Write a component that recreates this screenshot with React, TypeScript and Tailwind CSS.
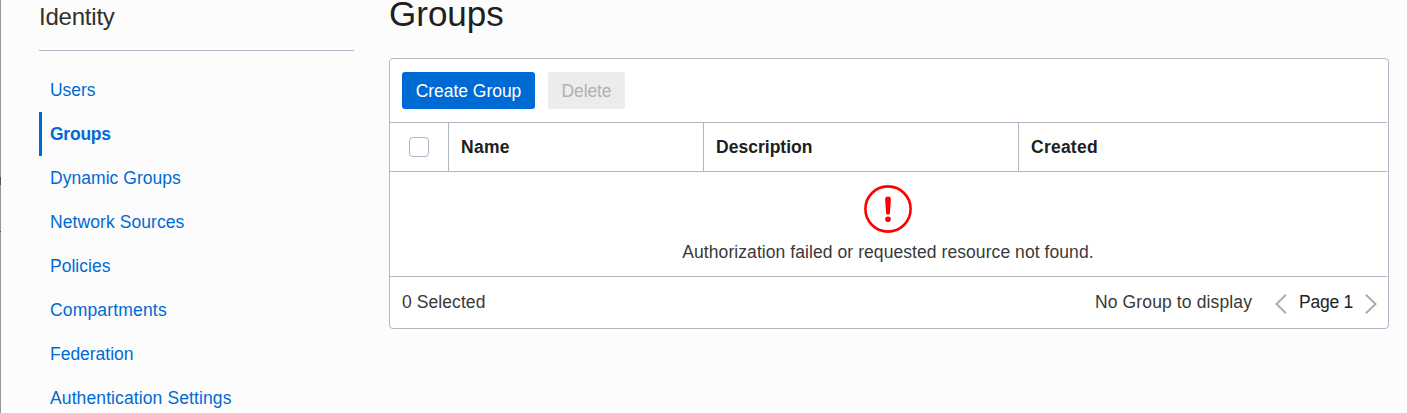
const links = [
  { label: "Users", cls: "tracking-[-0.05px]" },
  { label: "Groups", cls: "tracking-[-0.24px]", active: true },
  { label: "Dynamic Groups", cls: "tracking-[0.04px]" },
  { label: "Network Sources", cls: "tracking-[0.08px]" },
  { label: "Policies", cls: "tracking-[0.02px]" },
  { label: "Compartments", cls: "tracking-[0.17px]" },
  { label: "Federation", cls: "tracking-[-0.02px]" },
  { label: "Authentication Settings", cls: "tracking-[0.11px]" },
];

function Sidebar() {
  return (
    <aside className="ml-[38px] w-[315px] shrink-0">
      <h2 className="flex h-[51px] items-start border-b border-[#b0bac6] text-[24px] leading-[34px] font-light tracking-[-0.22px] text-[#303030]">
        <span>Identity</span>
      </h2>
      <nav className="mt-[17px]">
        {links.map((l) => (
          <a
            key={l.label}
            className={`flex h-[44px] items-center border-l-[3px] pl-[8px] text-[17.5px] leading-[20px] whitespace-nowrap text-[#006ad4] ${
              l.active ? "border-[#006ad4] font-bold" : "border-transparent"
            } ${l.cls}`}
          >
            <span>{l.label}</span>
          </a>
        ))}
      </nav>
    </aside>
  );
}

function GroupsPanel() {
  return (
    <section className="flex h-[271px] w-[1000px] flex-col rounded-[4px] border border-[#b0b6c3] bg-white pr-px text-[17.5px] leading-[20px]">
      <div className="flex h-[63px] gap-[13px] pt-[13px] pl-[12px]">
        <button className="flex h-[37px] w-[133px] items-center justify-center rounded-[3px] bg-[#006ad4] tracking-[-0.03px] whitespace-nowrap text-white">
          <span>Create Group</span>
        </button>
        <button className="flex h-[37px] w-[77px] items-center justify-center rounded-[3px] bg-[#ececec] tracking-[-0.09px] text-[#b1b1b1]">
          <span>Delete</span>
        </button>
      </div>
      <div className="flex h-[50px] border-y border-[#b0b6c3] font-bold text-[#202020]">
        <div className="flex w-[59px] items-center border-r border-[#b0b6c3] pl-[19px]">
          <span className="size-[20px] rounded-[4px] border border-[#b0b6c3]" />
        </div>
        <div className="flex w-[255px] items-center border-r border-[#b0b6c3] pl-[12px] tracking-[0.31px]">
          <span>Name</span>
        </div>
        <div className="flex w-[315px] items-center border-r border-[#b0b6c3] pl-[12px] tracking-[0.02px]">
          <span>Description</span>
        </div>
        <div className="flex items-center pl-[12px] tracking-[0.24px]">
          <span>Created</span>
        </div>
      </div>
      <div className="flex h-[105px] flex-col items-center border-b border-[#b0b6c3] pt-[13px] pr-px text-[#393939]">
        <svg width="48" height="48" viewBox="0 0 48 48" className="shrink-0">
          <circle cx="24" cy="24" r="22.6" fill="none" stroke="#f00" strokeWidth="2.6" />
          <path d="M24 11.600c1.900 0 3 1.100 2.900 3L25.900 28c-.1 1.200-.8 1.700-1.900 1.700s-1.800-.5-1.900-1.700L21.100 14.600c-.1-1.900 1-3 2.900-3z" fill="#f00" />
          <circle cx="24" cy="34.200" r="2.800" fill="#f00" />
        </svg>
        <p className="mt-[9px] tracking-[0.07px] whitespace-nowrap">Authorization failed or requested resource not found.</p>
      </div>
      <div className="flex h-[51px] items-center justify-between pr-[10px] pb-[2px] pl-[12px] text-[#393939]">
        <span className="tracking-[0.08px]">0 Selected</span>
        <div className="flex items-center">
          <span className="mr-[23px] tracking-[0.13px]">No Group to display</span>
          <svg width="12" height="20" viewBox="0 0 12 20" fill="none" stroke="#adadad" strokeWidth="2" className="mt-[5px] mr-[12px]">
            <path d="M11 .8L1.500 10L11 19.200" />
          </svg>
          <span className="tracking-[-0.26px] text-[#202020]">Page 1</span>
          <svg width="12" height="20" viewBox="0 0 12 20" fill="none" stroke="#adadad" strokeWidth="2" className="mt-[5px] ml-[12px]">
            <path d="M1 .8L10.500 10L1 19.200" />
          </svg>
        </div>
      </div>
    </section>
  );
}

export default function App() {
  return (
    <div className="flex h-[413px] w-[1407px] overflow-hidden bg-[#fcfcfc] font-['Liberation_Sans',Arial,sans-serif]">
      <div className="flex w-px shrink-0 flex-col bg-[#989898]">
        <span className="mt-[177px] h-[8px] bg-[#5c4e54]" />
        <span className="mt-[46px] h-px bg-[#505050]" />
      </div>
      <Sidebar />
      <main className="ml-[35px]">
        <h1 className="h-[58px] text-[35px] leading-[27px] text-[#202020]">
          <span>Groups</span>
        </h1>
        <GroupsPanel />
      </main>
    </div>
  );
}
